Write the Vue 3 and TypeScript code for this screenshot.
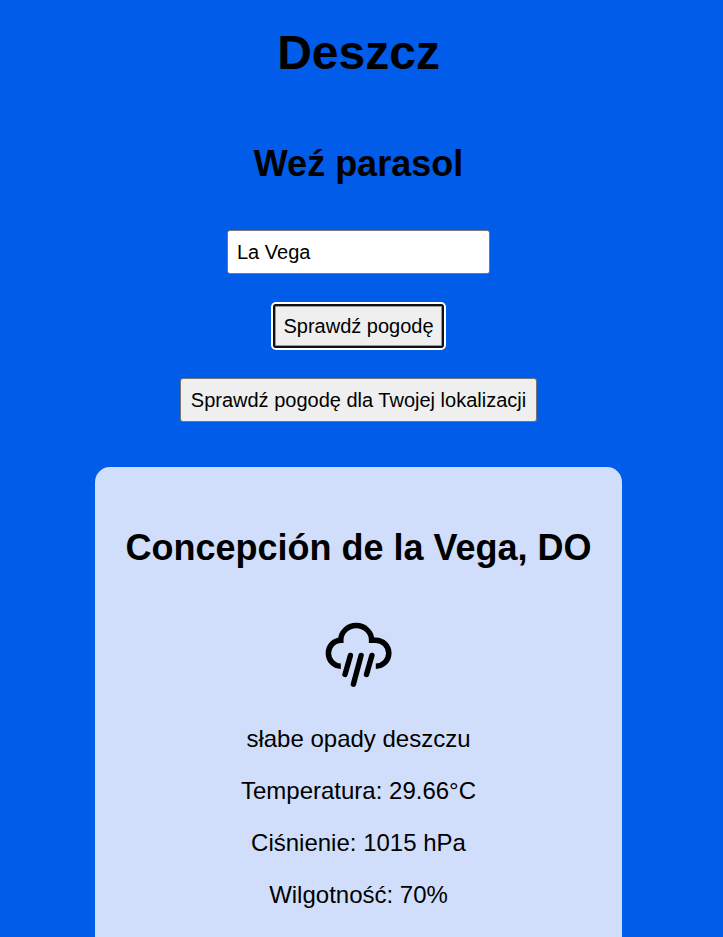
<script setup lang="ts">
import { ref } from 'vue'

interface Weather {
  place: string
  description: string
  temperature: number
  pressure: number
  humidity: number
}

const city = ref('La Vega')
const weather = ref<Weather>({
  place: 'Concepción de la Vega, DO',
  description: 'słabe opady deszczu',
  temperature: 29.66,
  pressure: 1015,
  humidity: 70,
})
</script>

<template>
  <main class="page">
    <h1>Deszcz</h1>
    <h2>Weź parasol</h2>
    <form class="search" @submit.prevent>
      <input v-model="city" class="control field" type="text" aria-label="Miasto" />
      <button class="control button current" type="submit">Sprawdź pogodę</button>
      <button class="control button" type="button">Sprawdź pogodę dla Twojej lokalizacji</button>
    </form>
    <section class="card">
      <h2>{{ weather.place }}</h2>
      <svg class="icon" viewBox="0 0 72 72" fill="none" stroke="currentColor" aria-hidden="true">
        <path
          stroke-width="5.5"
          d="M17.8 47.2A12.4 13 0 0 1 17.8 21.2A15.4 14.6 0 0 1 48.6 21.2H52.8A13 13 0 0 1 52.8 47.2"
        />
        <path stroke-width="5.4" stroke-linecap="round" d="M27.4 36.4 22 55.4M38.1 36.4 30.4 65.2M48.9 36.4 43.5 55.4" />
      </svg>
      <div class="details">
        <p>{{ weather.description }}</p>
        <p>Temperatura: {{ weather.temperature }}°C</p>
        <p>Ciśnienie: {{ weather.pressure }} hPa</p>
        <p>Wilgotność: {{ weather.humidity }}%</p>
      </div>
    </section>
  </main>
</template>

<style>
body {
  background: #005ce9;
}
</style>

<style scoped>
.page {
  box-sizing: border-box;
  min-height: 100vh;
  padding: 25px 6px 0 0;
  display: flex;
  flex-direction: column;
  align-items: center;
  font-family: 'Liberation Sans', Arial, sans-serif;
  font-size: 24px;
  line-height: 28px;
  text-align: center;
  color: #000;
}

h1,
h2,
p {
  margin: 0;
}

h1 {
  margin-bottom: 62px;
  font-size: 48px;
  line-height: 56px;
}

h2 {
  font-size: 36px;
  line-height: 42px;
}

.search {
  margin: 45px 0;
  display: flex;
  flex-direction: column;
  align-items: center;
  gap: 30px;
}

.control {
  box-sizing: border-box;
  height: 44px;
  margin: 0;
  padding: 0 10px;
  border: 1px solid #767676;
  border-radius: 3px;
  font-family: inherit;
  font-size: 20px;
  color: #000;
}

.field {
  width: 263px;
  padding: 0 9px;
  background: #fff;
}

.button {
  background: #efefef;
}

.current {
  padding: 0 9px;
  outline: 2px solid #101010;
  outline-offset: -2px;
  box-shadow: 0 0 0 2px #fff, inset 0 0 0 2px #9a9a9a;
}

.card {
  padding: 60px 30px;
  display: flex;
  flex-direction: column;
  align-items: center;
  border-radius: 15px;
  background: #d0defb;
}

.icon {
  width: 72px;
  height: 72px;
  margin: 50px 0 34px;
}

.details {
  display: flex;
  flex-direction: column;
  gap: 24px;
}
</style>
